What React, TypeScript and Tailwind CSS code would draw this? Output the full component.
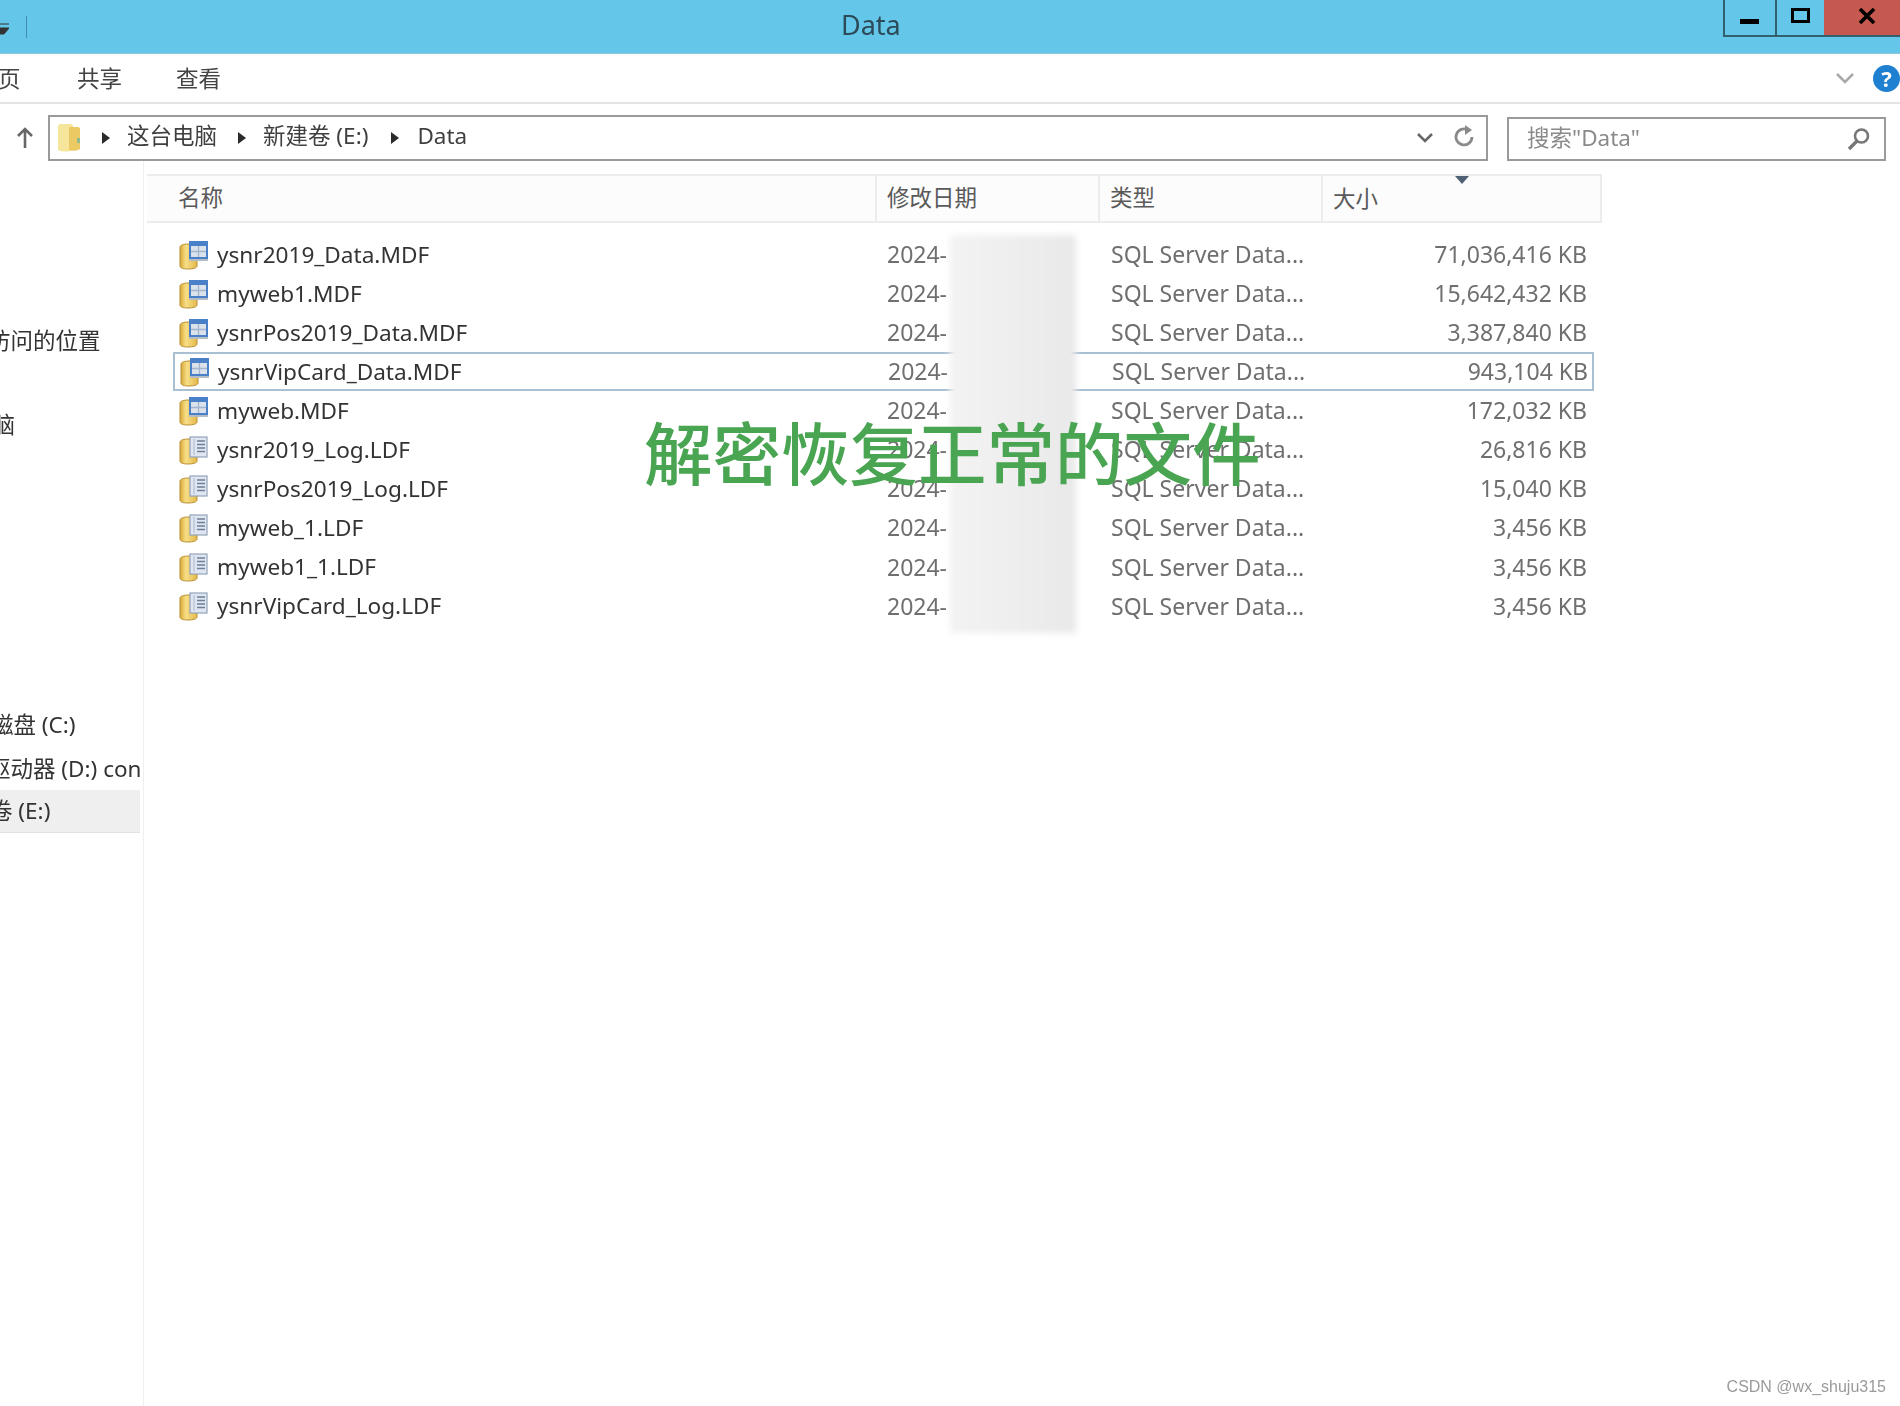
import React from "react";

const FONT = "font-['Noto_Sans','Noto_Sans_CJK_SC',sans-serif]";

const files: [string, string, string][] = [
  ["ysnr2019_Data.MDF", "d", "71,036,416 KB"],
  ["myweb1.MDF", "d", "15,642,432 KB"],
  ["ysnrPos2019_Data.MDF", "d", "3,387,840 KB"],
  ["ysnrVipCard_Data.MDF", "d", "943,104 KB"],
  ["myweb.MDF", "d", "172,032 KB"],
  ["ysnr2019_Log.LDF", "l", "26,816 KB"],
  ["ysnrPos2019_Log.LDF", "l", "15,040 KB"],
  ["myweb_1.LDF", "l", "3,456 KB"],
  ["myweb1_1.LDF", "l", "3,456 KB"],
  ["ysnrVipCard_Log.LDF", "l", "3,456 KB"],
];

function DbIcon({ kind }: { kind: string }) {
  return (
    <svg width="30" height="30" viewBox="0 0 30 30" className="shrink-0">
      <defs>
        <linearGradient id="cyl" x1="0" x2="1" y1="0" y2="0">
          <stop offset="0" stopColor="#d8a838" />
          <stop offset="0.35" stopColor="#f7de86" />
          <stop offset="1" stopColor="#e4b94c" />
        </linearGradient>
      </defs>
      <path d="M1 7c0-2 4-3 8-3s9 1 9 3v19c0 2-4 3-9 3s-8-1-8-3z" fill="url(#cyl)" stroke="#b98f32" strokeWidth="1" />
      {kind === "d" ? (
        <>
          <rect x="10" y="1" width="19" height="18" fill="#4a80c8" />
          <rect x="12" y="6" width="15" height="11" fill="#dbe2ec" />
          <path d="M12 11.5h15M19.5 6v11" stroke="#a3b5cd" strokeWidth="1.3" />
          <path d="M10 19h19v2H10z" fill="#b4bcc6" />
        </>
      ) : (
        <>
          <rect x="11" y="2" width="17" height="20" fill="#dfe6f2" stroke="#93a3ba" strokeWidth="1.2" />
          <path d="M18 6h8M18 9.5h8M18 13h8M18 16.5h8" stroke="#6f7f98" strokeWidth="1.3" />
          <path d="M15 4v16" stroke="#b9c5d6" strokeWidth="1.4" />
        </>
      )}
    </svg>
  );
}

function Caret() {
  return (
    <svg width="10" height="14" viewBox="0 0 10 14" className="shrink-0">
      <path d="M1 1l8 6-8 6z" fill="#2b2b2b" />
    </svg>
  );
}

function SideItem({ label, className }: { label: string; className: string }) {
  return <div className={`flex items-center whitespace-nowrap text-[22.5px] text-[#333] ${className}`}>{label}</div>;
}

export default function App() {
  return (
    <div className={`relative h-[1406px] w-[1900px] overflow-hidden bg-white ${FONT}`}>
      <div className="flex h-full flex-col blur-[0.5px]">
        {/* title bar */}
        <div className="relative flex h-[54px] shrink-0 items-start justify-between border-b border-[#8fc6dc] bg-[#64c7ea]">
          <div className="flex h-[53px] items-center">
            <svg width="10" height="12" viewBox="0 0 10 12" className="mt-1">
              <path d="M0 1h9M0 5h9L4 11H0z" fill="#333" stroke="#333" strokeWidth="1" />
            </svg>
            <div className="ml-4 h-[22px] w-px bg-[#3f8fb0]" />
          </div>
          <div className="absolute left-[841px] top-[7px] text-[27px] leading-[36px] text-[#2c4a57]">Data</div>
          <div className="flex h-[37px] border-b-2 border-l-2 border-[#33606f]">
            <div className="flex w-[52px] items-end justify-center border-r-2 border-[#33606f] pb-[11px]">
              <div className="mr-[2px] h-[5px] w-[19px] bg-black" />
            </div>
            <div className="flex w-[47px] items-center justify-center pb-1">
              <div className="h-[15px] w-[19px] border-[3.5px] border-black" />
            </div>
            <div className="flex w-[76px] items-center justify-center bg-[#c5584f] pb-1 pl-[10px]">
              <svg width="18" height="16" viewBox="0 0 18 16">
                <path d="M2 1l14 14M16 1L2 15" stroke="#000" strokeWidth="3.6" />
              </svg>
            </div>
          </div>
        </div>

        {/* ribbon */}
        <div className="flex h-[50px] shrink-0 items-center border-b-2 border-[#e4e4e4] text-[22.5px] text-[#444]">
          <span className="ml-[-2px] mt-[2px] w-[79px]">页</span>
          <span className="mt-[2px] w-[99px]">共享</span>
          <span className="mt-[2px]">查看</span>
          <svg width="20" height="12" viewBox="0 0 20 12" className="ml-auto">
            <path d="M2 2l8 8 8-8" fill="none" stroke="#a8a8a8" strokeWidth="2.6" />
          </svg>
          <div className="ml-[18px] flex h-[27px] w-[27px] items-center justify-center rounded-full bg-[#1f7fd0] text-[22px] font-bold leading-none text-white">?</div>
        </div>

        {/* address row */}
        <div className="flex h-[57px] shrink-0 items-start pt-[11px]">
          <div className="flex h-[46px] w-[48px] items-center justify-center">
            <svg width="18" height="24" viewBox="0 0 18 24" className="ml-[2px]">
              <path d="M9 22V3M2 10l7-7 7 7" fill="none" stroke="#666" strokeWidth="2.6" />
            </svg>
          </div>
          <div className="flex h-[46px] w-[1440px] items-center border-2 border-[#9a9a9a] text-[22.5px] leading-[28px] text-[#3f3f3f]">
            <svg width="24" height="30" viewBox="0 0 24 30" className="ml-[7px] shrink-0">
              <path d="M1 3c0-1 1-2 2-2h11c1 0 2 1 2 2v24c-4 2-11 2-15 0z" fill="#f6e69c" />
              <path d="M12 4h9c1 0 2 1 2 2v20c-3 2-7 2-11 1z" fill="#ecc963" />
              <path d="M20 15h3v5h-3z" fill="#8fbb8a" />
            </svg>
            <div className="ml-[20px]"><Caret /></div>
            <span className="ml-[16px] mt-[-4px]">这台电脑</span>
            <div className="ml-[20px]"><Caret /></div>
            <span className="ml-[16px] mt-[-4px]">新建卷 (E:)</span>
            <div className="ml-[22px]"><Caret /></div>
            <span className="ml-[17px] mt-[-4px]">Data</span>
            <svg width="18" height="12" viewBox="0 0 18 12" className="ml-auto">
              <path d="M2 2l7 7 7-7" fill="none" stroke="#666" strokeWidth="2.6" />
            </svg>
            <svg width="24" height="26" viewBox="0 0 24 26" className="ml-[19px] mr-[9px]">
              <path d="M19 12a8 8 0 1 1-4-7" fill="none" stroke="#8a8a8a" strokeWidth="2.8" />
              <path d="M12 0l7 5-7 5z" fill="#8a8a8a" />
            </svg>
          </div>
          <div className="ml-[19px] mt-[2px] flex h-[44px] w-[379px] items-center border-2 border-[#9a9a9a] pl-[18px] text-[22.5px] text-[#8a8a8a]">
            <span className="mt-[-3px]">搜索"Data"</span>
            <svg width="24" height="24" viewBox="0 0 24 24" className="ml-auto mr-[13px]">
              <circle cx="14.5" cy="9" r="6.5" fill="none" stroke="#777" strokeWidth="2.6" />
              <path d="M10 14l-8 8" stroke="#777" strokeWidth="3.4" />
            </svg>
          </div>
        </div>

        {/* body */}
        <div className="flex min-h-0 flex-1">
          <aside className="flex w-[144px] shrink-0 flex-col overflow-hidden border-r border-[#efefef] pt-[159px]">
            <SideItem label="最近访问的位置" className="ml-[-57px] h-[42px]" />
            <SideItem label="这台电脑" className="ml-[-75px] mt-[42px] h-[42px]" />
            <SideItem label="本地磁盘 (C:)" className="ml-[-54px] mt-[258px] h-[42px]" />
            <SideItem label="DVD 驱动器 (D:) con" className="ml-[-64px] mt-[2px] h-[42px]" />
            <div className="h-[43px] w-[140px] overflow-hidden border-b border-[#e2e2e2] bg-[#efefef]">
              <SideItem label="新建卷 (E:)" className="ml-[-55px] h-[42px]" />
            </div>
          </aside>

          <main className="min-w-0 flex-1 pl-[3px] pt-[13px]">
            <div className="grid h-[49px] w-[1455px] grid-cols-[728px_223px_223px_281px] items-center border-2 border-l-0 border-[#ececec] bg-[#fcfcfc] text-[22.5px] text-[#5a5a5a]">
              <div className="mt-[-2px] pl-[31px]">名称</div>
              <div className="flex h-full items-center border-l-2 border-[#ececec] pb-[2px] pl-[10px]">修改日期</div>
              <div className="flex h-full items-center border-l-2 border-[#ececec] pb-[2px] pl-[10px]">类型</div>
              <div className="relative flex h-full items-center border-l-2 border-[#ececec] pl-[10px]">
                大小
                <svg width="14" height="8" viewBox="0 0 14 8" className="absolute left-[132px] top-0">
                  <path d="M0 0h14L7 8z" fill="#4f6075" />
                </svg>
              </div>
            </div>
            <div className="ml-[26px] mt-[12px] w-[1421px]">
              {files.map(([name, kind, size]) => (
                <div
                  key={name}
                  className={`grid h-[39.1px] grid-cols-[702px_223px_223px_273px] items-center border ${
                    name === "ysnrVipCard_Data.MDF" ? "border-2 border-[#a9bfd2]" : "border-transparent"
                  }`}
                >
                  <div className="flex items-center gap-[8px] whitespace-nowrap pl-[5px] text-[22.6px] text-[#333]">
                    <DbIcon kind={kind} />
                    <span>{name}</span>
                  </div>
                  <div className="mt-[-1px] pl-[11px] text-[23px] text-[#6f6f6f]">2024-</div>
                  <div className="mt-[-1px] whitespace-nowrap pl-[12px] text-[23px] text-[#6f6f6f]">SQL Server Data...</div>
                  <div className="mt-[-1px] pr-[8px] text-right text-[23px] text-[#6f6f6f]">{size}</div>
                </div>
              ))}
            </div>
          </main>
        </div>
      </div>

      {/* redaction patch over the date column */}
      <div className="absolute left-[950px] top-[235px] h-[398px] w-[126px] bg-gradient-to-r from-[#f3f3f3] to-[#e9e9e9] blur-[3px]" />

      {/* caption laid over the picture */}
      <div className="absolute left-[644px] top-[408px] whitespace-nowrap text-[68.5px] font-medium leading-[92px] text-[#4aa552]">
        解密恢复正常的文件
      </div>

      {/* watermark */}
      <div className="absolute bottom-[9px] right-[14px] font-['Liberation_Sans',sans-serif] text-[16px] leading-[20px] text-[#9a9a9a]">
        CSDN @wx_shuju315
      </div>
    </div>
  );
}
